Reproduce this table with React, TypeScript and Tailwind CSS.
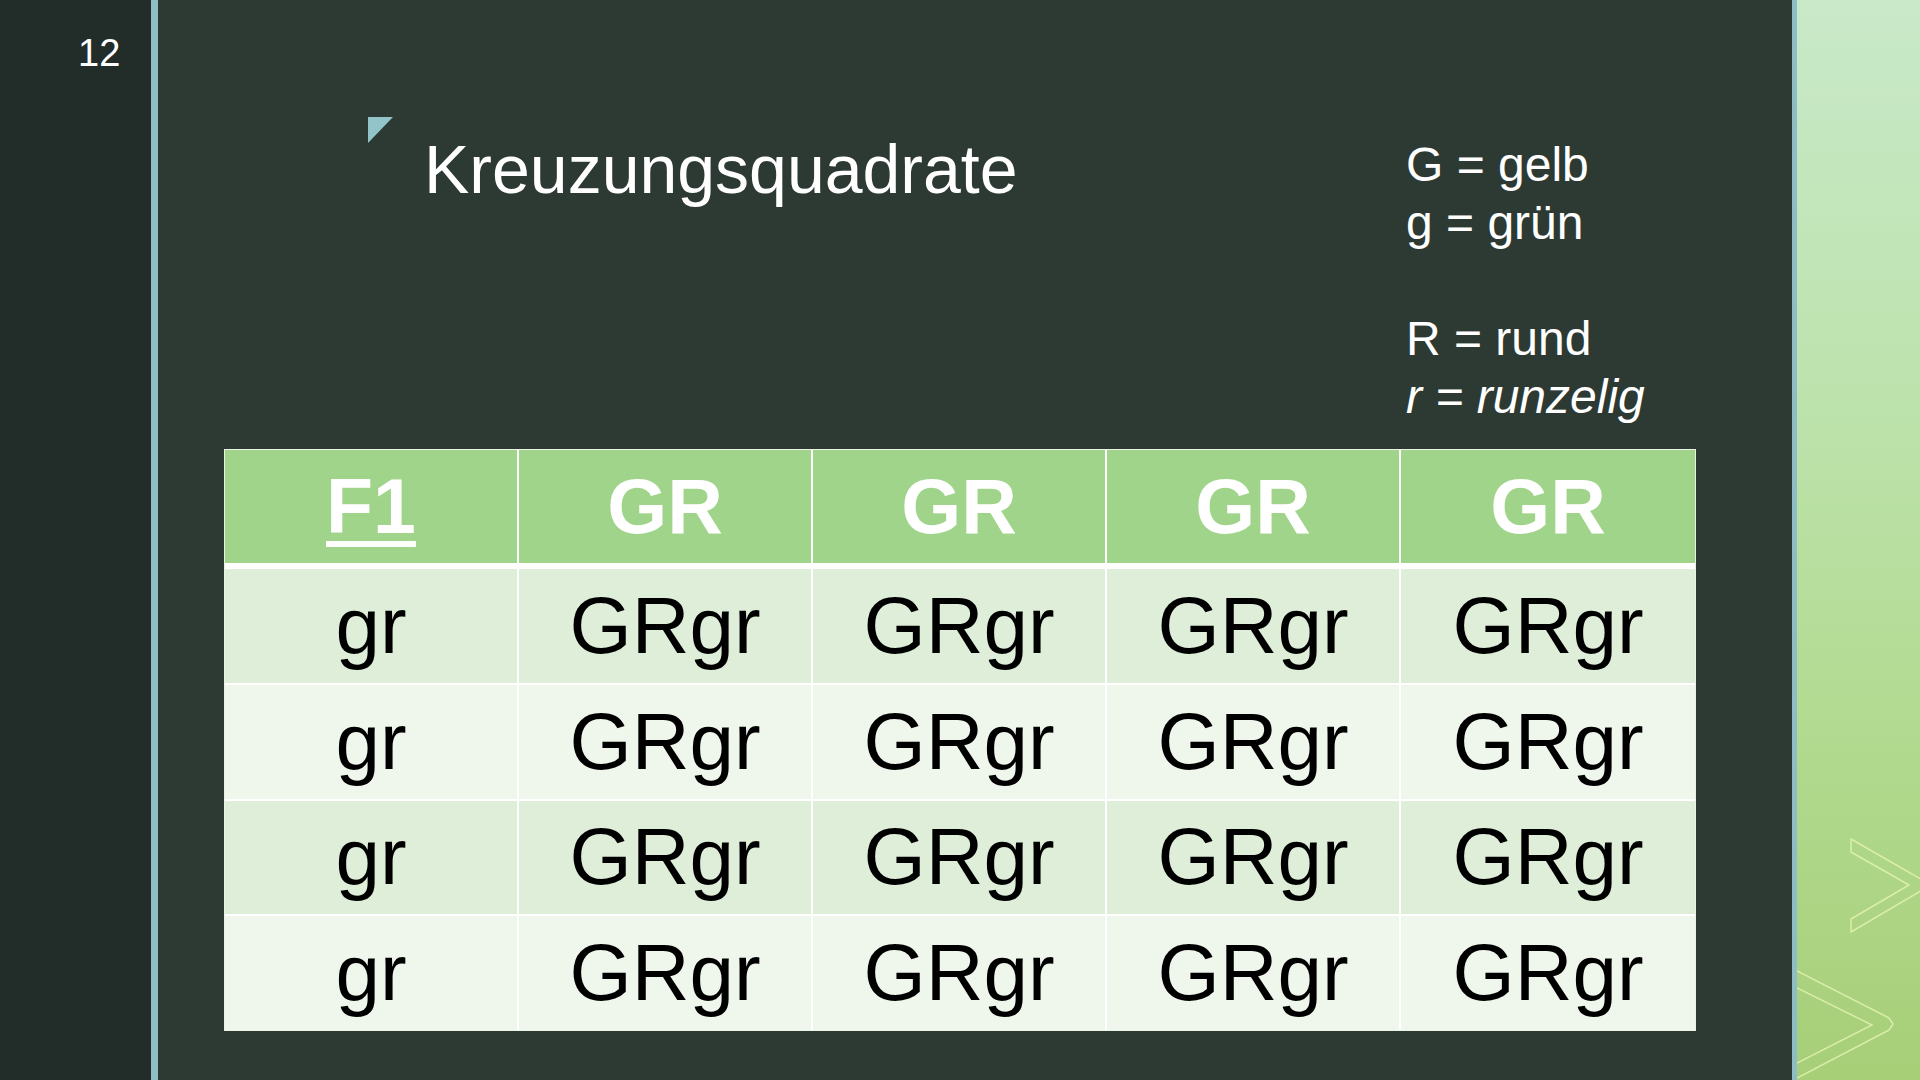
const rows = ["gr", "gr", "gr", "gr"];

const Chevrons = () => (
  <svg className="absolute inset-0" width="123" height="1080" viewBox="0 0 123 1080" fill="none">
    <polygon
      points="54,839 134,885 54,932 54,919 112,885 54,852"
      stroke="#eaf5b8"
      strokeOpacity="0.75"
      strokeWidth="1.5"
      strokeLinejoin="round"
    />
    <polyline
      points="0,971 92,1018 96,1024 92,1030 0,1078"
      stroke="#eaf5b8"
      strokeOpacity="0.75"
      strokeWidth="1.5"
      strokeLinejoin="round"
    />
    <polyline points="0,988 75,1025 0,1063" stroke="#eaf5b8" strokeOpacity="0.75" strokeWidth="1.5" />
  </svg>
);

export default function App() {
  return (
    <div className="flex w-[1920px] h-[1080px] overflow-hidden font-['Liberation_Sans',Arial,sans-serif]">
      {/* slide number strip */}
      <div className="w-[151px] h-full bg-[#222d29] pt-[34px] pl-[78px]">
        <span className="text-[38px] leading-[38px] text-white">12</span>
      </div>
      <div className="w-[7px] h-full bg-[#90c0c5]" />

      {/* main slide area */}
      <div className="flex-1 h-full bg-[#2c3a33] pt-[117px]">
        <div className="flex h-[332px] items-start">
          <div className="flex w-[1248px] items-start">
            <svg className="ml-[210px]" width="25" height="26" viewBox="0 0 25 26">
              <polygon points="0,0 25,0 0,26" fill="#93c4c9" />
            </svg>
            <h1 className="ml-[31px] mt-[14px] text-[68px] leading-[76px] text-white font-normal">
              Kreuzungsquadrate
            </h1>
          </div>
          <div className="mt-[19px] text-[48px] leading-[58px] text-white">
            <p>G = gelb</p>
            <p>g = grün</p>
            <p>&nbsp;</p>
            <p>R = rund</p>
            <p className="italic">r = runzelig</p>
          </div>
        </div>

        <div className="ml-[66px] w-[1472px] h-[582px] border border-[#e9f2e4] flex flex-col">
          <div className="grid grid-cols-5 h-[119px] shrink-0 bg-[#a0d48a] border-b-[6px] border-white">
            <div className="flex items-center justify-center border-r-2 border-white text-[77px] leading-none font-bold text-white">
              <span className="underline decoration-[6px] underline-offset-[8px]">F1</span>
            </div>
            {["GR", "GR", "GR", "GR"].map((h, i) => (
              <div
                key={i}
                className={`flex items-center justify-center text-[77px] leading-none font-bold text-white ${i < 3 ? "border-r-2 border-white" : ""}`}
              >
                {h}
              </div>
            ))}
          </div>
          {rows.map((r, ri) => (
            <div
              key={ri}
              className={`grid grid-cols-5 flex-1 ${ri % 2 === 0 ? "bg-[#dfeed9]" : "bg-[#eff6ec]"} ${ri > 0 ? "border-t-2 border-white" : ""}`}
            >
              <div className="flex items-center justify-center border-r-2 border-white text-[80px] leading-none text-black">
                {r}
              </div>
              {[0, 1, 2, 3].map((c) => (
                <div
                  key={c}
                  className={`flex items-center justify-center text-[80px] leading-none text-black ${c < 3 ? "border-r-2 border-white" : ""}`}
                >
                  GRgr
                </div>
              ))}
            </div>
          ))}
        </div>
      </div>

      <div className="w-[5px] h-full bg-[#8fbdc5]" />
      <div className="relative w-[123px] h-full bg-[linear-gradient(180deg,#c9e9c9_0%,#bce2aa_40%,#b3db92_65%,#a7cf78_100%)]">
        <Chevrons />
      </div>
    </div>
  );
}
